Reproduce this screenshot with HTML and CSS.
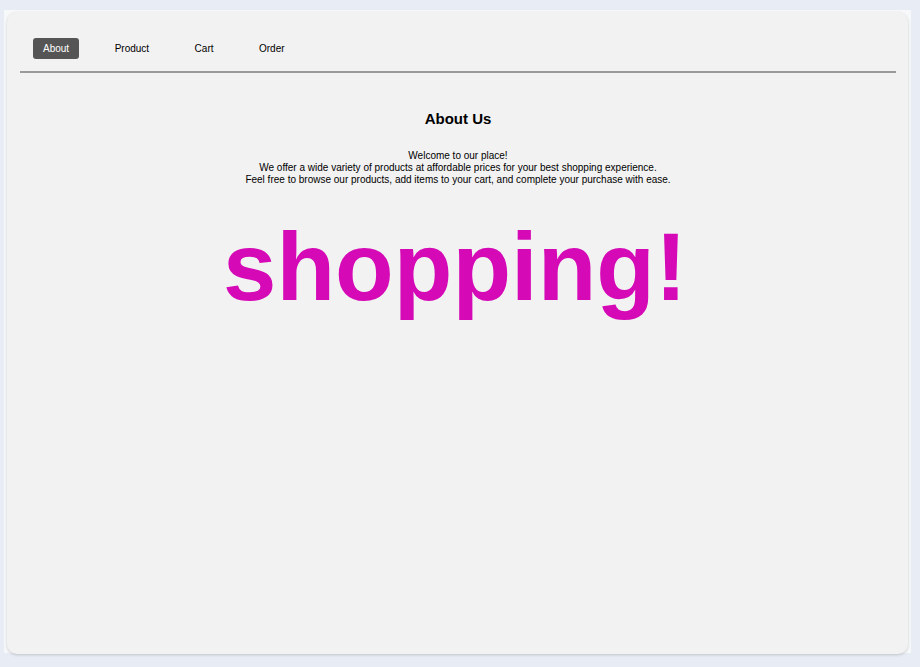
FILE: index.html
```html
<!DOCTYPE html>
<html lang="en">
<head>
<meta charset="utf-8">
<title>About</title>
<link rel="stylesheet" href="styles.css">
</head>
<body>
<div class="frame">
  <div class="card">
    <nav class="nav">
      <a class="nav-item active" href="#">About</a>
      <a class="nav-item" href="#">Product</a>
      <a class="nav-item" href="#">Cart</a>
      <a class="nav-item" href="#">Order</a>
    </nav>
    <main class="about">
      <h1 class="title">About Us</h1>
      <p class="intro">Welcome to our place!<br>We offer a wide variety of products at affordable prices for your best shopping experience.<br>Feel free to browse our products, add items to your cart, and complete your purchase with ease.</p>
      <div class="big">shopping!</div>
    </main>
  </div>
</div>
</body>
</html>
```
FILE: styles.css
```css
html, body {
  margin: 0;
  padding: 0;
}
body {
  background: #e8edf5;
  font-family: "Liberation Sans", Arial, sans-serif;
  color: #000;
}
.frame {
  margin: 10px 9px 10px 4px;
  padding: 2px 3px 2px 3px;
  background: #f7f8fa;
  height: 643px;
  box-sizing: border-box;
}
.card {
  height: 642px;
  box-sizing: border-box;
  background: #f2f2f2;
  border-radius: 10px;
  box-shadow: 0 1px 3px rgba(0,0,0,0.18);
  padding: 26px 12px 0 13px;
}
.nav {
  display: flex;
  gap: 25.5px;
  padding: 0 0 12px 13px;
  border-bottom: 2px solid #9a9a9a;
}
.nav-item {
  display: block;
  height: 21px;
  line-height: 21px;
  padding: 0 10px;
  font-size: 10px;
  color: #000;
  text-decoration: none;
  border-radius: 3px;
}
.nav-item.active {
  background: #555555;
  color: #fff;
}
.about {
  text-align: center;
}
.title {
  margin: 36px 0 0;
  font-size: 15px;
  font-weight: bold;
  line-height: 20px;
}
.intro {
  margin: 21px 0 0;
  font-size: 10px;
  line-height: 12px;
}
.big {
  margin-top: 31px;
  padding-right: 6px;
  font-size: 96px;
  font-weight: bold;
  line-height: 100px;
  color: #d509b6;
}
```
